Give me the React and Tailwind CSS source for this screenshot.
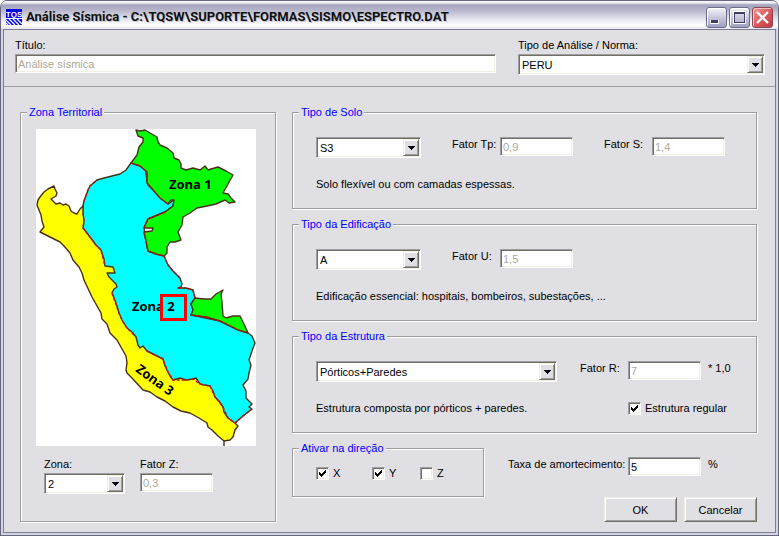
import { useState } from "react";
import { clsx } from "clsx";

const SUNKEN =
  "border border-t-[#9d9da1] border-l-[#9d9da1] border-r-white border-b-white bg-white shadow-[inset_1px_1px_0_#716f64,inset_-1px_-1px_0_#f1efe2]";

const RAISED =
  "border border-t-[#f1efe2] border-l-[#f1efe2] border-r-[#716f64] border-b-[#716f64] bg-[#e0dfe3] shadow-[inset_1px_1px_0_#fff,inset_-1px_-1px_0_#9d9da1]";

function TextBox({ id, value, disabled, className }) {
  const [text, setText] = useState(value);

  return (
    <input
      id={id}
      type="text"
      value={text}
      disabled={disabled}
      onChange={(e) => setText(e.target.value)}
      className={clsx(SUNKEN, "h-[19px] px-0.5 outline-none disabled:text-[#aca899]", className)}
    />
  );
}

function ComboBox({ id, label, options, className }) {
  const [selected, setSelected] = useState(options[0]);

  return (
    <div className={clsx("relative h-[21px]", className)}>
      <select
        id={id}
        aria-label={label}
        value={selected}
        onChange={(e) => setSelected(e.target.value)}
        className={clsx(SUNKEN, "block h-full w-full appearance-none pr-5 pl-[3px] outline-none")}
      >
        {options.map((option) => (
          <option key={option}>{option}</option>
        ))}
      </select>
      <span
        className={clsx(
          RAISED,
          "pointer-events-none absolute inset-y-0.5 right-0.5 flex w-4 items-center justify-center"
        )}
      >
        <svg className="h-1 w-[7px]" viewBox="0 0 7 4" shapeRendering="crispEdges">
          <path d="M0 0h7v1H6v1H5v1H4v1H3V3H2V2H1V1H0z" />
        </svg>
      </span>
    </div>
  );
}

function CheckBox({ label, defaultChecked, className }) {
  return (
    <label className={clsx("flex items-center gap-1", className)}>
      <span className="grid">
        <input
          type="checkbox"
          defaultChecked={defaultChecked}
          className={clsx(SUNKEN, "peer col-start-1 row-start-1 size-[13px] appearance-none")}
        />
        <svg
          className="pointer-events-none invisible col-start-1 row-start-1 size-[13px] peer-checked:visible"
          viewBox="0 0 13 13"
          shapeRendering="crispEdges"
        >
          <path d="M3 5h1v1h1v1h1V6h1V5h1V4h1V3h1v3H9v1H8v1H7v1H6v1H5V9H4V8H3z" />
        </svg>
      </span>
      {label}
    </label>
  );
}

function Group({ title, className, bodyClassName, children }) {
  return (
    <fieldset
      className={clsx(
        "min-w-0 border border-[#9d9da1] shadow-[1px_1px_0_#fff,inset_1px_1px_0_#fff]",
        className
      )}
    >
      <legend className="ml-1.5 bg-[#e0dfe3] px-0.5 leading-[14px] text-[#0000ff]">{title}</legend>
      <div className={bodyClassName}>{children}</div>
    </fieldset>
  );
}

function PushButton({ children }) {
  return (
    <button type="button" className={clsx(RAISED, "h-[25px] w-[73px] text-center")}>
      {children}
    </button>
  );
}

function TitleButton({ label, danger, children }) {
  return (
    <button
      type="button"
      aria-label={label}
      className={clsx(
        "size-[21px] rounded-[3px] border",
        danger
          ? "border-[#8c4654] bg-linear-to-br from-[#f09a9a] via-[#dd5a5c] to-[#c43c44] shadow-[inset_1px_1px_0_#f7c3c3]"
          : "border-[#6c6c8c] bg-linear-to-b from-[#f4f4fa] via-[#c8c8da] to-[#a0a0c0] shadow-[inset_1px_1px_0_#fff]"
      )}
    >
      <svg viewBox="0 0 19 19" className="size-[19px]" fill="none">
        {children}
      </svg>
    </button>
  );
}

function TitleBar() {
  return (
    <header className="flex h-[29px] items-center gap-1 rounded-t-[6px] border-t border-[#676784] bg-[linear-gradient(#fff_0px,#e8e8f0_2px,#a4a3bf_4px,#b6b5cb_9px,#dfdfe9_17px,#fff_24px,#e6e6ee_28px)] pt-1 pr-[5px] pl-[5px]">
      <svg className="size-4 shrink-0" viewBox="0 0 16 16">
        <path fill="#0000e8" d="M0 0h16v16H0z" />
        <path fill="#fff" d="M0 9h16v1H0z" />
        <path stroke="#fff" strokeWidth="1.3" d="M0 11l5 5M3 10l6 6M7 10l6 6M11 10l5 5M0 14l2 2" />
        <text x="8" y="8" textAnchor="middle" fill="#fff" className="font-['Liberation_Sans'] text-[8px] font-bold">
          TQS
        </text>
      </svg>
      <h1 className="flex-1 truncate font-[Roboto,sans-serif] text-[13px] leading-5 font-bold text-[#0e1010] [text-shadow:1px_1px_0_#c4c4d4]">
        Análise Sísmica - C:\TQSW\SUPORTE\FORMAS\SISMO\ESPECTRO.DAT
      </h1>
      <div className="flex gap-0.5">
        <TitleButton label="Minimizar">
          <path fill="#fff" d="M3 12h9v4H3z" />
          <path fill="#3e3e66" d="M4 12h7v3H4z" />
        </TitleButton>
        <TitleButton label="Maximizar">
          <path stroke="#fff" d="M3.5 3.5h12v12h-12z" />
          <path fill="#3e3e66" fillRule="evenodd" d="M4 4h11v11H4zM5 6v8h9V6z" />
        </TitleButton>
        <TitleButton label="Fechar" danger>
          <path stroke="#fff" strokeWidth="2.4" d="M4 4l11 11M15 4L4 15" />
        </TitleButton>
      </div>
    </header>
  );
}

function ZoneMap() {
  return (
    <svg viewBox="0 0 220 317" role="img" aria-label="Mapa de zonas" className="block w-full bg-white">
      <g stroke="#4a3018" strokeWidth="1.4" strokeLinejoin="round">
        {/* zona 2, centro: runs under zona 3 along the shared border */}
        <path
          fill="#00ffff"
          d="M47 77L48 72L52 61L54 57L61 51L68 49L84 45L90 41L95 34L101 34L109 39L112 56L132 75L138 71L137 77L129 83L112 90L108 99L112 122L128 127L132 136L137 142L144 149L146 155L145 158L142 159L150 159L157 161L159 169L155 175L157 181L155 186L184 192L192 196L212 204L216 207L219 214L216 222L213 231L215 236L213 244L212 250L207 256L210 262L210 269L216 275L213 278L216 280L207 287L199 294L185 293L140 265L100 226L68 170L60 130L45 99L46 88Z"
        />
        {/* zona 3, litoral */}
        <path
          fill="#ffff00"
          d="M18 57L19 60L21 64L20 67L15 70L17 72L20 75L24 74L27 76L30 75L33 77L35 82L38 84L41 85L44 80L47 77L47 84L48 92L47 99L51 104L60 116L65 121L68 130L69 137L77 138L79 144L71 144L73 148L80 155L81 158L78 160L76 164L80 174L83 184L86 191L91 199L96 203L100 208L102 216L104 219L107 217L111 222L119 226L127 230L129 237L132 243L134 247L137 251L144 249L150 251L157 250L160 249L164 255L168 256L174 257L177 262L179 268L183 272L187 278L188 283L192 289L196 292L199 294L202 297L199 301L197 308L194 311L188 312L182 307L176 301L172 298L171 294L163 289L154 284L145 282L137 278L129 272L121 268L114 263L107 261L96 249L91 244L90 241L91 234L90 227L81 211L74 204L71 195L66 190L65 184L56 168L48 151L46 144L43 138L37 131L34 124L28 117L24 113L14 108L4 103L8 98L6 92L5 86L3 81L1 76L2 71L4 68L8 63L12 60Z"
        />
        <path d="M188 312V317" />
        {/* zona 1, selva */}
        <g fill="#00ff00">
          <path d="M95 34L101 26L103 18L107 13L107 9L102 7L100 1L104 2L109 1L114 4L121 8L122 13L124 16L131 19L137 24L138 29L143 31L145 35L145 39L150 41L157 39L164 41L169 37L172 41L175 40L182 38L190 42L197 46L192 55L187 64L192 65L195 69L199 73L193 74L189 71L180 75L171 77L161 79L154 84L147 88L146 96L142 103L145 111L139 113L134 113L131 118L131 124L128 127L120 125L112 122L110 112L108 103L116 102L117 99L108 99L112 90L129 83L137 77L138 71L135 71L132 75L124 69L111 54L111 43L104 37Z" />
          <path d="M159 169L168 170L175 170L180 165L187 161L185 165L186 173L187 187L190 189L197 187L204 187L208 195L212 204L202 201L192 196L184 192L170 188L155 186L157 181L155 175Z" />
        </g>
        <path
          stroke="#c01010"
          strokeDasharray="3 2"
          fill="none"
          d="M48 72L52 61L54 57L61 51M95 34L104 37L111 43L111 54L124 69L132 75M129 83L112 90L108 99M108 103L110 112L112 122L120 125L128 127L132 136L137 142L144 149M142 159L150 159L157 161L159 169M155 186L170 188L184 192L192 196L202 201L212 204M47 84L48 92L47 99L60 116L65 121L69 137M76 164L83 184L86 191L91 199L100 208M111 222L127 230L132 243L137 251L150 251L157 250L164 255L174 257L179 268L187 278L192 289L199 294L207 287L216 280"
        />
      </g>
      <g className="font-['Open_Sans',sans-serif] text-[13px] font-bold">
        <text x="133" y="60">Zona 1</text>
        <text x="96" y="182">Zona 2</text>
        <text transform="translate(99 242) rotate(36)">Zona 3</text>
      </g>
      <path stroke="#ff0000" strokeWidth="3" fill="none" d="M125.500 166.500h24v24h-24z" />
    </svg>
  );
}

export default function App() {
  return (
    <div className="min-h-screen bg-white font-['Liberation_Sans',Arial,sans-serif] text-[11px] leading-[14px] text-black">
      <div className="flex min-h-screen flex-col rounded-t-[8px] border-x border-b border-[#676784] bg-[#d4d4e0]">
        <TitleBar />
        <main className="mx-0.5 mb-0.5 flex-1 border border-[#7c7c98] bg-[#e0dfe3]">
          <section className="flex items-start gap-[22px] border-b border-[#9d9da1] pt-2 pr-2.5 pb-[11px] pl-[11px]">
            <div className="flex flex-1 flex-col gap-0.5">
              <label htmlFor="titulo">Título:</label>
              <TextBox id="titulo" value="Análise sísmica" disabled />
            </div>
            <div className="flex w-[247px] flex-col gap-0.5">
              <label htmlFor="norma">Tipo de Análise / Norma:</label>
              <ComboBox id="norma" options={["PERU"]} />
            </div>
          </section>

          <section className="flex gap-4 pt-[18px] pr-[18px] pb-2.5 pl-4">
            <Group title="Zona Territorial" className="w-64 shrink-0 pb-[27px]">
              <div className="pt-2.5 pr-[19px] pl-[15px]">
                <ZoneMap />
              </div>
              <div className="flex gap-[15px] pt-[11px] pl-[23px]">
                <div className="flex flex-col gap-0.5">
                  <label htmlFor="zona">Zona:</label>
                  <ComboBox id="zona" options={["2", "1", "3"]} className="w-[81px]" />
                </div>
                <div className="flex flex-col gap-0.5">
                  <label htmlFor="fator-z">Fator Z:</label>
                  <TextBox id="fator-z" value="0,3" disabled className="w-[73px]" />
                </div>
              </div>
            </Group>

            <div className="flex min-w-0 flex-1 flex-col gap-2">
              <Group title="Tipo de Solo" className="h-[104px]" bodyClassName="px-[23px]">
                <div className="flex items-start pt-[18px]">
                  <ComboBox label="Tipo de Solo" options={["S3", "S1", "S2"]} className="mr-[31px] w-[105px]" />
                  <label htmlFor="fator-tp" className="w-12">Fator Tp:</label>
                  <TextBox id="fator-tp" value="0,9" disabled className="mr-[31px] w-[73px]" />
                  <label htmlFor="fator-s" className="w-12">Fator S:</label>
                  <TextBox id="fator-s" value="1,4" disabled className="w-[73px]" />
                </div>
                <p className="pt-[19px]">Solo flexível ou com camadas espessas.</p>
              </Group>

              <Group title="Tipo da Edificação" className="h-[104px]" bodyClassName="px-[23px]">
                <div className="flex items-start pt-[18px]">
                  <ComboBox label="Tipo da Edificação" options={["A", "B", "C"]} className="mr-[31px] w-[105px]" />
                  <label htmlFor="fator-u" className="w-12">Fator U:</label>
                  <TextBox id="fator-u" value="1,5" disabled className="w-[73px]" />
                </div>
                <p className="pt-[19px]">Edificação essencial: hospitais, bombeiros, subestações, ...</p>
              </Group>

              <Group title="Tipo da Estrutura" className="h-[104px]" bodyClassName="px-[23px]">
                <div className="flex items-start pt-[18px]">
                  <ComboBox
                    label="Tipo da Estrutura"
                    options={["Pórticos+Paredes", "Pórticos", "Paredes"]}
                    className="mr-[23px] w-[241px]"
                  />
                  <label htmlFor="fator-r" className="w-12">Fator R:</label>
                  <TextBox id="fator-r" value="7" disabled className="mr-[7px] w-[73px]" />
                  <span>* 1,0</span>
                </div>
                <div className="flex pt-[19px]">
                  <p className="w-[312px]">Estrutura composta por pórticos + paredes.</p>
                  <CheckBox label="Estrutura regular" defaultChecked />
                </div>
              </Group>

              <div className="flex items-start">
                <Group title="Ativar na direção" className="h-14 w-48" bodyClassName="pl-[23px]">
                  <div className="flex pt-[11px]">
                    <CheckBox label="X" defaultChecked className="w-14" />
                    <CheckBox label="Y" defaultChecked className="w-12" />
                    <CheckBox label="Z" />
                  </div>
                </Group>
                <div className="ml-6 flex pt-4">
                  <label htmlFor="taxa" className="w-[120px]">Taxa de amortecimento:</label>
                  <TextBox id="taxa" value="5" className="mr-[7px] w-[73px]" />
                  <span>%</span>
                </div>
              </div>

              <div className="-mt-2 flex justify-end gap-[7px]">
                <PushButton>OK</PushButton>
                <PushButton>Cancelar</PushButton>
              </div>
            </div>
          </section>
        </main>
      </div>
    </div>
  );
}
